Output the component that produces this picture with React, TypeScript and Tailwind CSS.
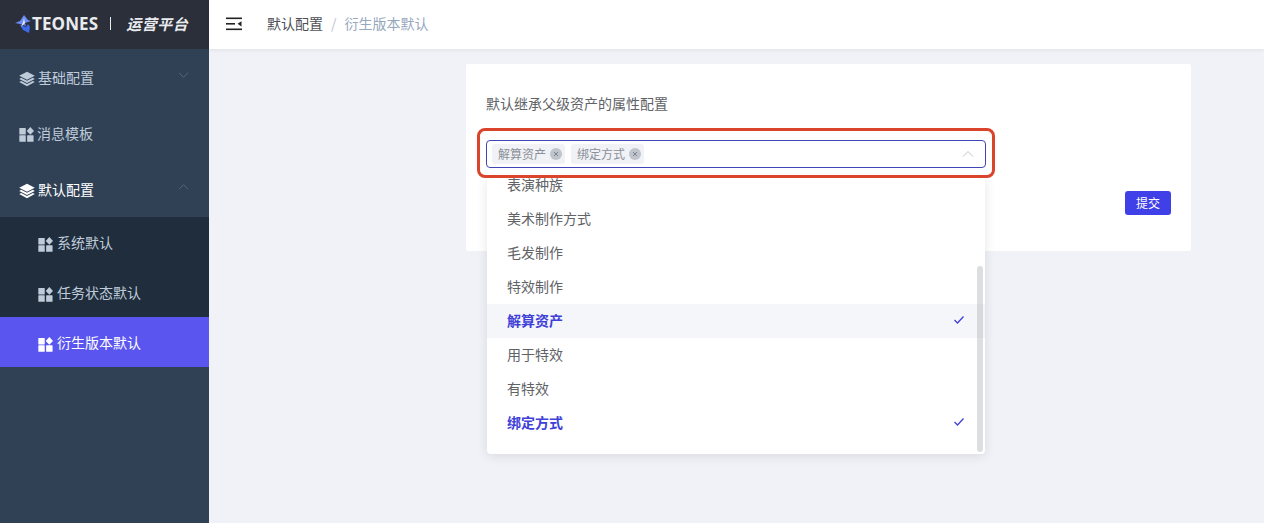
const font = { fontFamily: '"Noto Sans CJK SC", "Noto Sans", sans-serif' };

function Layers({ className }: { className: string }) {
  return (
    <svg viewBox="0 0 16 16" className={className} fill="currentColor">
      <path d="M8 .8 15.8 4.8 8 8.8.2 4.8z" />
      <path d="M2.2 6.8 8 9.8l5.8-3 2 1.1L8 12 .2 7.9z" />
      <path d="M2.2 10 8 13l5.8-3 2 1.1L8 15.2.2 11.1z" />
    </svg>
  );
}

function Blocks({ className }: { className: string }) {
  return (
    <svg viewBox="0 0 14 14" className={className} fill="currentColor">
      <rect x="0.3" y="1" width="6" height="6" rx="0.5" />
      <path d="M10.6.1 14 3.7 10.6 7.3 7.2 3.7z" />
      <rect x="0.3" y="7.8" width="6" height="6" rx="0.5" />
      <rect x="7.6" y="7.8" width="6" height="6" rx="0.5" />
    </svg>
  );
}

function Chevron({ up, className }: { up: boolean; className: string }) {
  return (
    <svg viewBox="0 0 12 8" className={className} fill="none" stroke="currentColor" strokeWidth="1">
      <path d={up ? "M1 6.5 6 1.5l5 5" : "M1 1.5l5 5 5-5"} />
    </svg>
  );
}

function Check() {
  return (
    <svg viewBox="0 0 12 10" className="h-[10px] w-[12px] text-[#4040d8]" fill="none" stroke="currentColor" strokeWidth="1.3">
      <path d="M1.5 5 4.5 8 10.5 1.5" />
    </svg>
  );
}

function Tag({ label }: { label: string }) {
  return (
    <span className="flex h-[20px] items-center gap-[4px] rounded-[3px] bg-[#f0f2f5] pl-[6px] pr-[3px] text-[12px] text-[#8b8f99]">
      {label}
      <span className="flex h-[12px] w-[12px] items-center justify-center rounded-full bg-[#c0c4cc] text-[#7d818a]">
        <svg viewBox="0 0 8 8" className="h-[8px] w-[8px]" fill="none" stroke="currentColor" strokeWidth="1">
          <path d="M2 2l4 4M6 2 2 6" />
        </svg>
      </span>
    </span>
  );
}

const options = [
  { label: "表演种族" },
  { label: "美术制作方式" },
  { label: "毛发制作" },
  { label: "特效制作" },
  { label: "解算资产", selected: true, hover: true },
  { label: "用于特效" },
  { label: "有特效" },
  { label: "绑定方式", selected: true },
];

function SubItem({ label, active }: { label: string; active?: boolean }) {
  return (
    <div className={`flex h-[50px] items-center gap-[4px] pl-[38px] text-[14px] ${active ? "bg-[#5a55ee] text-white" : "text-[#bfcbd9]"}`}>
      <Blocks className="mt-[4px] h-[15px] w-[15px] shrink-0" />
      <span>{label}</span>
    </div>
  );
}

export default function App() {
  return (
    <div style={font} className="flex h-[523px] w-[1264px] overflow-hidden bg-[#f0f2f7]">
      <aside className="flex h-full w-[209px] shrink-0 flex-col bg-[#304156]">
        <div className="flex h-[49px] items-center bg-[#2b2f3a] pb-[2px] pl-[15px] text-[#e9ebef]">
          <svg viewBox="0 0 17 18" className="h-[18px] w-[17px] shrink-0">
            <path d="M9 0 13 5 16 6 10 8 11 11 5 9 0 8 5 6z" fill="#6d8bf7" />
            <path d="M5 10 11 12 13 9 15 12 14 18 8 15z" fill="#3c68ea" />
            <path d="M9 3 10 8 6 12 8 7z" fill="#dfe6ff" />
          </svg>
          <span style={{ fontFamily: '"Open Sans", sans-serif' }} className="text-[17px] font-bold leading-none tracking-[0.1px]">TEONES</span>
          <span className="ml-[12px] h-[13px] w-[1px] bg-[#e9ebef]" />
          <span className="ml-[15px] text-[15px] font-bold italic leading-none tracking-[0.5px]">运营平台</span>
        </div>
        <div className="flex h-[56px] items-center pl-[19px] pr-[20px] text-[14px] text-[#bfcbd9]">
          <Layers className="mt-[3px] h-[16px] w-[16px] shrink-0" />
          <span className="ml-[3px]">基础配置</span>
          <Chevron up={false} className="mb-[5px] ml-auto h-[8px] w-[11px] text-[#566a80]" />
        </div>
        <div className="flex h-[56px] items-center pl-[19px] text-[14px] text-[#bfcbd9]">
          <Blocks className="mt-[3px] h-[15px] w-[15px] shrink-0" />
          <span className="ml-[3px]">消息模板</span>
        </div>
        <div className="flex h-[56px] items-center pl-[19px] pr-[20px] text-[14px] text-white">
          <Layers className="mt-[3px] h-[16px] w-[16px] shrink-0" />
          <span className="ml-[3px]">默认配置</span>
          <Chevron up className="mb-[5px] ml-auto h-[8px] w-[11px] text-[#566a80]" />
        </div>
        <div className="bg-[#1f2d3d]">
          <SubItem label="系统默认" />
          <SubItem label="任务状态默认" />
          <SubItem label="衍生版本默认" active />
        </div>
      </aside>

      <div className="flex min-w-0 flex-1 flex-col">
        <header className="flex h-[49px] shrink-0 items-center bg-white pb-[2px] pl-[17px] text-[14px] shadow-[0_1px_4px_rgba(0,21,41,0.08)]">
          <svg viewBox="0 0 16 14" className="h-[14px] w-[16px] text-[#222]" fill="currentColor">
            <rect x="0" y="0.5" width="16" height="1.6" />
            <rect x="0" y="6" width="9" height="1.6" />
            <rect x="0" y="11.5" width="16" height="1.6" />
            <path d="M15.5 4.2v5.2L11.5 6.8z" />
          </svg>
          <span className="ml-[25px] text-[#4d4f55]">默认配置</span>
          <span className="mx-[8px] text-[#c0c4cc]">/</span>
          <span className="text-[#97a8be]">衍生版本默认</span>
        </header>

        <main className="flex-1 pl-[257px] pt-[15px]">
          <section className="relative h-[187px] w-[725px] rounded-[2px] bg-white px-[20px] pt-[28px]">
            <div className="text-[14px] leading-[22px] text-[#606266]">默认继承父级资产的属性配置</div>
            <div className="mt-[26px] flex h-[28px] w-[500px] items-center gap-[6px] rounded-[4px] border border-[#4046b8] bg-white pl-[5px] pr-[11px]">
              <Tag label="解算资产" />
              <Tag label="绑定方式" />
              <Chevron up className="ml-auto h-[8px] w-[12px] text-[#c0c4cc]" />
            </div>
            <div className="mt-[23px] flex justify-end">
              <button className="h-[24px] w-[46px] rounded-[3px] bg-[#4040e8] text-[12px] text-white">提交</button>
            </div>

            <div className="absolute left-[21px] top-[114px] h-[276px] w-[498px] overflow-hidden rounded-b-[4px] bg-white shadow-[0_2px_12px_rgba(0,0,0,0.1)]">
              <div className="-mt-[10px]">
                {options.map((o) => (
                  <div
                    key={o.label}
                    className={`flex h-[34px] items-center justify-between px-[20px] pb-[2px] text-[14px] ${o.hover ? "bg-[#f5f6fa]" : ""} ${o.selected ? "font-bold text-[#4040d8]" : "text-[#606266]"}`}
                  >
                    <span>{o.label}</span>
                    {o.selected && <Check />}
                  </div>
                ))}
              </div>
              <div className="absolute bottom-[2px] right-[2px] top-[88px] w-[6px] rounded-[3px] bg-[#909399]/30" />
            </div>

            <div className="pointer-events-none absolute left-[11px] top-[64px] h-[50px] w-[518px] rounded-[8px] border-[3px] border-[#d9442b]" />
          </section>
        </main>
      </div>
    </div>
  );
}
